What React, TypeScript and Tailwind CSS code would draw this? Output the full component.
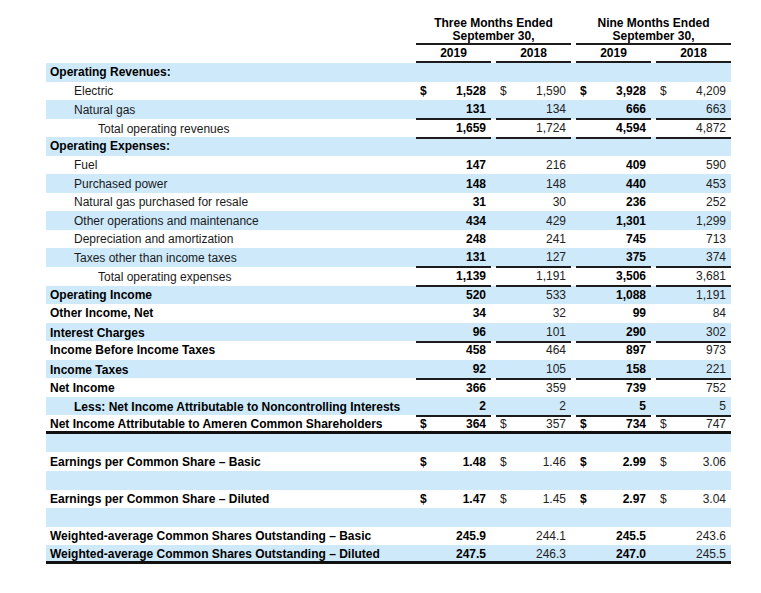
import clsx from 'clsx';

type Row = {
  label: string;
  level?: 0 | 1 | 2;
  bold?: boolean;
  vals?: string[];
  dollar?: boolean;
  line?: boolean;
  thick?: boolean;
};

const ROWS: Row[] = [
  { label: 'Operating Revenues:', bold: true },
  { label: 'Electric', level: 1, vals: ['1,528', '1,590', '3,928', '4,209'], dollar: true },
  { label: 'Natural gas', level: 1, vals: ['131', '134', '666', '663'], line: true },
  { label: 'Total operating revenues', level: 2, vals: ['1,659', '1,724', '4,594', '4,872'], line: true },
  { label: 'Operating Expenses:', bold: true },
  { label: 'Fuel', level: 1, vals: ['147', '216', '409', '590'] },
  { label: 'Purchased power', level: 1, vals: ['148', '148', '440', '453'] },
  { label: 'Natural gas purchased for resale', level: 1, vals: ['31', '30', '236', '252'] },
  { label: 'Other operations and maintenance', level: 1, vals: ['434', '429', '1,301', '1,299'] },
  { label: 'Depreciation and amortization', level: 1, vals: ['248', '241', '745', '713'] },
  { label: 'Taxes other than income taxes', level: 1, vals: ['131', '127', '375', '374'], line: true },
  { label: 'Total operating expenses', level: 2, vals: ['1,139', '1,191', '3,506', '3,681'], line: true },
  { label: 'Operating Income', bold: true, vals: ['520', '533', '1,088', '1,191'] },
  { label: 'Other Income, Net', bold: true, vals: ['34', '32', '99', '84'] },
  { label: 'Interest Charges', bold: true, vals: ['96', '101', '290', '302'], line: true },
  { label: 'Income Before Income Taxes', bold: true, vals: ['458', '464', '897', '973'] },
  { label: 'Income Taxes', bold: true, vals: ['92', '105', '158', '221'], line: true },
  { label: 'Net Income', bold: true, vals: ['366', '359', '739', '752'] },
  { label: 'Less: Net Income Attributable to Noncontrolling Interests', level: 1, bold: true, vals: ['2', '2', '5', '5'], line: true },
  { label: 'Net Income Attributable to Ameren Common Shareholders', bold: true, vals: ['364', '357', '734', '747'], dollar: true, thick: true },
  { label: '' },
  { label: 'Earnings per Common Share \u2013 Basic', bold: true, vals: ['1.48', '1.46', '2.99', '3.06'], dollar: true },
  { label: '' },
  { label: 'Earnings per Common Share \u2013 Diluted', bold: true, vals: ['1.47', '1.45', '2.97', '3.04'], dollar: true },
  { label: '' },
  { label: 'Weighted-average Common Shares Outstanding \u2013 Basic', bold: true, vals: ['245.9', '244.1', '245.5', '243.6'] },
  { label: 'Weighted-average Common Shares Outstanding \u2013 Diluted', bold: true, vals: ['247.5', '246.3', '247.0', '245.5'], thick: true },
];

const INDENT = ['pl-[4px]', 'pl-[28px]', 'pl-[52px]'];

function ValueCell({ value, dollar, bold, line }: { value?: string; dollar?: boolean; bold: boolean; line?: boolean }) {
  return (
    <div
      className={clsx(
        'flex h-full w-[75px] items-center justify-between pl-[4px] pr-[5px]',
        bold ? 'font-bold text-black' : 'text-[#222]',
        line && 'border-b-2 border-[#1c1c1c]',
      )}
    >
      <span>{dollar ? '$' : ''}</span>
      <span>{value ?? ''}</span>
    </div>
  );
}

export default function App() {
  return (
    <div className="h-[593px] w-[761px] bg-white pl-[46px] pt-[17px] font-['Liberation_Sans',Arial,sans-serif] text-[12px] text-black">
      {/* Period headings */}
      <div className="grid grid-cols-[370px_160px_155px]">
        <div />
        <div className="flex h-[28px] w-[155px] flex-col items-center border-b-2 border-[#1c1c1c] font-bold leading-[12.5px]">
          <span>Three Months Ended</span>
          <span>September 30,</span>
        </div>
        <div className="flex h-[28px] w-[155px] flex-col items-center border-b-2 border-[#1c1c1c] font-bold leading-[12.5px]">
          <span>Nine Months Ended</span>
          <span>September 30,</span>
        </div>
      </div>
      <div className="grid grid-cols-[370px_80px_80px_80px_75px]">
        <div />
        {['2019', '2018', '2019', '2018'].map((y, i) => (
          <div key={i} className="h-[18px] w-[75px] border-b-2 border-[#1c1c1c] text-center font-bold leading-[16px]">
            {y}
          </div>
        ))}
      </div>

      {/* Statement rows */}
      <div className="w-[685px]">
        {ROWS.map((r, i) => (
          <div
            key={i}
            className={clsx(
              'grid h-[18.55px] grid-cols-[370px_80px_80px_80px_75px]',
              i % 2 === 0 && 'bg-[#cde9fa]',
              r.thick && 'border-b-[3px] border-[#111]',
            )}
          >
            <div
              className={clsx(
                'flex items-center whitespace-nowrap',
                INDENT[r.level ?? 0],
                r.bold ? 'font-bold text-black' : 'text-[#1a1a1a]',
              )}
            >
              {r.label}
            </div>
            {r.vals
              ? r.vals.map((v, j) => (
                  <ValueCell key={j} value={v} dollar={r.dollar} bold={j % 2 === 0} line={r.line} />
                ))
              : [0, 1, 2, 3].map((j) => <div key={j} />)}
          </div>
        ))}
      </div>
    </div>
  );
}
